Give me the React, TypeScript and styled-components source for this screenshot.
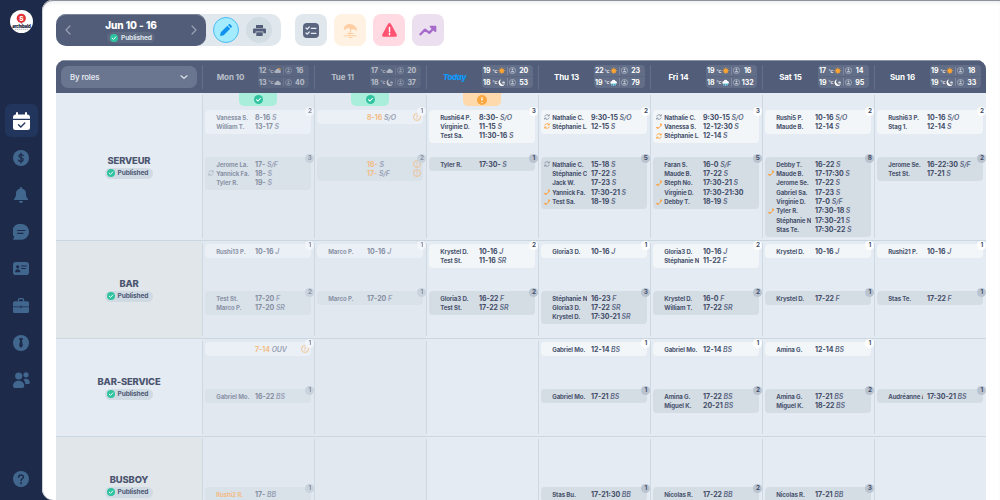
import React from "react";
import styled, { createGlobalStyle, css } from "styled-components";

const GlobalStyle = createGlobalStyle`
  * { box-sizing: border-box; }
  html, body { margin: 0; padding: 0; height: 500px; overflow: hidden; }
  body {
    font-family: Inter, "Liberation Sans", sans-serif;
    background: #1e2a49;
    color: #49536d;
  }
  svg { display: block; flex: none; }
`;

/* ---------- layout ---------- */

const Page = styled.div`
  display: flex;
  width: 1000px;
  height: 500px;
  overflow: hidden;
`;

const Sidebar = styled.nav`
  width: 42px;
  height: 500px;
  padding: 10px 0 0;
  display: flex;
  flex-direction: column;
  align-items: center;
  color: #41678f;
`;

const Logo = styled.div`
  width: 23px;
  height: 23px;
  margin-bottom: 71px;
`;

const NavItem = styled.div<{ $active?: boolean; $bottom?: boolean }>`
  width: 33px;
  height: ${(p) => (p.$active ? 33 : 37)}px;
  display: flex;
  align-items: center;
  justify-content: center;
  border-radius: 6px;
  ${(p) => p.$active && css`background: #22355d; color: #fff; margin-bottom: 2px; padding-top: 1px;`}
  ${(p) => p.$bottom && css`margin-top: 62px;`}
`;

const Panel = styled.main`
  flex: 1;
  height: 500px;
  padding: 14px 14px 0;
  background: #fff;
  border-radius: 11px 0 0 11px;
  box-shadow: inset 0 1px 0 #8f929a, inset 0 4px 4px -2px #e6e7ec, inset 1px 0 0 #c9ced8;
  overflow: hidden;
`;

/* ---------- toolbar ---------- */

const Toolbar = styled.div`
  display: flex;
  height: 32px;
  margin-bottom: 14px;
`;

const WeekGroup = styled.div`
  display: flex;
  width: 225px;
  border-radius: 10px;
  background: #e1e8ed;
  margin-right: 14px;
`;

const WeekPicker = styled.div`
  width: 150px;
  height: 32px;
  padding: 0 8px;
  display: flex;
  align-items: center;
  justify-content: space-between;
  border-radius: 10px;
  background: #515d79;
  box-shadow: inset 0 1px 0 #7c8599;
  color: #9aa3b5;
`;

const WeekText = styled.div`
  display: flex;
  flex-direction: column;
  align-items: center;
  padding-top: 2px;
`;

const WeekTitle = styled.div`
  font-size: 10px;
  line-height: 13px;
  letter-spacing: -0.05px;
  font-weight: 800;
  color: #fff;
`;

const Pill = styled.div<{ $dark?: boolean }>`
  display: flex;
  align-items: center;
  gap: 3px;
  height: 11px;
  width: 48px;
  padding-left: 1.5px;
  border-radius: 6px;
  font-size: 6.6px;
  letter-spacing: -0.12px;
  font-weight: 700;
  white-space: nowrap;
  background: ${(p) => (p.$dark ? "#5d6881" : "#d0dae2")};
  color: ${(p) => (p.$dark ? "#dfe4ec" : "#4f5a76")};
  ${(p) => p.$dark && css`padding-left: 3.5px; gap: 2.5px;`}
`;

const RoundButton = styled.div<{ $on?: boolean }>`
  width: 26px;
  height: 26px;
  margin: 3px 0 0 7px;
  border-radius: 50%;
  display: flex;
  align-items: center;
  justify-content: center;
  background: ${(p) => (p.$on ? "#a3ebfe" : "#d2dce3")};
  border: ${(p) => (p.$on ? "1px solid #4cbcf3" : "none")};
`;

const SquareButton = styled.div<{ $bg: string }>`
  width: 32px;
  height: 32px;
  margin-right: 7px;
  border-radius: 8px;
  display: flex;
  align-items: center;
  justify-content: center;
  background: ${(p) => p.$bg};
`;

/* ---------- schedule ---------- */

const Table = styled.section`
  width: 930px;
  border-radius: 9px 9px 0 0;
  overflow: hidden;
`;

const HeaderRow = styled.div`
  display: grid;
  grid-template-columns: 146px repeat(7, 112px);
  height: 33px;
  background: #515d79;
  box-shadow: inset 0 1px 0 #8a93a6;
`;

const SelectCell = styled.div`
  padding: 6px 5px 0;
`;

const Select = styled.div`
  height: 22px;
  padding: 0 9px;
  display: flex;
  align-items: center;
  justify-content: space-between;
  border-radius: 7px;
  background: #6a7690;
  color: #e2e6ee;
  font-size: 7.8px;
  letter-spacing: -0.1px;
  font-weight: 600;
`;

const DayHead = styled.div<{ $past?: boolean }>`
  display: flex;
  align-items: center;
  height: 33px;
  background: linear-gradient(#64708a, #64708a) 0 5px / 1px 24px no-repeat;
  & > * { opacity: ${(p) => (p.$past ? 0.6 : 1)}; }
`;

const DayName = styled.div<{ $today?: boolean }>`
  width: 56px;
  padding-left: 1px;
  text-align: center;
  font-size: 8px;
  letter-spacing: -0.1px;
  font-weight: 700;
  color: #fff;
  ${(p) => p.$today && css`color: #0d9bff; font-style: italic; font-weight: 800; letter-spacing: -0.35px;`}
`;

const Weather = styled.div`
  width: 51px;
  height: 23px;
  border-radius: 4px;
  background: linear-gradient(#626e87 11px, #5a6680 11px, #5a6680 12px, #626e87 12px);
  overflow: hidden;
`;

const WeatherLine = styled.div`
  display: flex;
  align-items: center;
  height: 11.5px;
  padding-left: 1px;
  color: #fff;
  font-size: 7px;
  letter-spacing: -0.1px;
  font-weight: 700;
`;

const Temp = styled.span`
  width: 9.4px;
`;

const Unit = styled.span`
  width: 5.4px;
  font-family: Roboto, sans-serif;
  font-size: 5.4px;
  font-weight: 500;
  letter-spacing: 0;
  white-space: nowrap;
`;

const Bar = styled.span`
  width: 1px;
  height: 8px;
  margin: 0 1.5px 0 1.5px;
  background: #7c87a0;
`;

const Guests = styled.span`
  flex: 1;
  text-align: center;
  padding-right: 2px;
`;

const RoleRow = styled.div<{ $first?: boolean; $alt?: boolean }>`
  display: grid;
  grid-template-columns: 146px repeat(7, 112px);
  height: ${(p) => (p.$first ? 148 : 98)}px;
  border-bottom: 1px solid #cbd8e2;
  background: #e4ebf3;
  --top: ${(p) => (p.$first ? 17 : 3)}px;
  --role: ${(p) => (p.$alt ? "#e1e6ea" : "#e4ebf3")};
`;

const RoleCell = styled.div`
  display: flex;
  flex-direction: column;
  align-items: center;
  justify-content: center;
  background: var(--role);
`;

const RoleName = styled.div`
  font-size: 9.4px;
  line-height: 13px;
  margin-top: -1px;
  padding-bottom: 1px;
  letter-spacing: -0.14px;
  font-weight: 800;
  color: #4c556f;
`;

const DayCell = styled.div<{ $past?: boolean }>`
  position: relative;
  padding: var(--top) 2px 0 3.4px;
  background:
    linear-gradient(#ccd8e2, #ccd8e2) 0 2px / 1px calc(100% - 4px) no-repeat,
    ${(p) => (p.$past ? "#e1e8f0" : "#e4ebf3")};
`;

const StatusTab = styled.div<{ $warn?: boolean }>`
  position: absolute;
  top: 0;
  left: 37px;
  width: 38px;
  height: 13px;
  display: flex;
  align-items: center;
  justify-content: center;
  border-radius: 0 0 5px 5px;
  background: ${(p) => (p.$warn ? "#fdd9ab" : "#a9eeda")};
`;

const Slot = styled.div<{ $past?: boolean }>`
  height: 47px;
  opacity: ${(p) => (p.$past ? 0.58 : 1)};
`;

const Card = styled.div<{ $evening?: boolean }>`
  position: relative;
  width: 106px;
  padding: 2.4px 2.8px 2.4px 3px;
  border-radius: 4px;
  background: ${(p) => (p.$evening ? "#d4dce4" : "#f2f6f9")};
`;

const Count = styled.span<{ $evening?: boolean }>`
  position: absolute;
  top: -3px;
  right: -3px;
  width: 9px;
  height: 9px;
  border-radius: 50%;
  text-align: center;
  font-size: 6.4px;
  line-height: 9px;
  font-weight: 700;
  color: #444e69;
  background: ${(p) => (p.$evening ? "#b9c4d0" : "#ffffff")};
`;

const ShiftLine = styled.div`
  display: flex;
  align-items: center;
  height: 9.37px;
  white-space: nowrap;
`;

const Mark = styled.span`
  width: 7.8px;
`;

const Name = styled.span<{ $hot?: boolean }>`
  width: 35.2px;
  margin-right: 3.6px;
  overflow: hidden;
  font-size: 6.1px;
  letter-spacing: -0.1px;
  line-height: 9px;
  font-weight: 700;
  color: ${(p) => (p.$hot ? "#ff9d33" : "#49536d")};
`;

const Time = styled.span<{ $hot?: boolean }>`
  font-size: 7px;
  line-height: 9px;
  font-weight: 700;
  color: ${(p) => (p.$hot ? "#ff9d33" : "#414b66")};
`;

const Tag = styled.em`
  flex: 1;
  margin-left: 1.6px;
  font-size: 6.9px;
  letter-spacing: -0.1px;
  line-height: 9px;
  font-weight: 600;
  color: #5d6984;
`;

/* ---------- icons ---------- */

const CheckDot = ({ size = 8 }: { size?: number }) => (
  <svg width={size} height={size} viewBox="0 0 16 16">
    <circle cx="8" cy="8" r="8" fill="#2fc3a0" />
    <path d="M4.4 8.3 7 10.8l4.6-5" fill="none" stroke="#fff" strokeWidth="1.8" strokeLinecap="round" />
  </svg>
);

const WarnDot = () => (
  <svg width="10" height="10" viewBox="0 0 16 16">
    <circle cx="8" cy="8" r="8" fill="#fba741" />
    <path d="M8 3.5v5.4M8 11v1.8" stroke="#fff" strokeWidth="2" />
  </svg>
);

const AlertRing = () => (
  <svg width="8" height="8" viewBox="0 0 16 16" fill="none" stroke="#ff9d33" strokeWidth="1.6">
    <circle cx="8" cy="8" r="7" />
    <path d="M8 4v5M8 10.6v2" />
  </svg>
);

const Chevron = ({ dir }: { dir: "left" | "right" | "down" }) => (
  <svg width="8" height="10" viewBox="0 0 8 10" fill="none" stroke="currentColor" strokeWidth="1.2" strokeLinecap="round" strokeLinejoin="round">
    <path d={dir === "left" ? "M6 1 2 5l4 4" : dir === "right" ? "M2 1l4 4-4 4" : "M1 3.8l3 2.6 3-2.6"} />
  </svg>
);

const CycleIcon = ({ hot }: { hot?: boolean }) => (
  <svg width="6" height="6" viewBox="0 0 12 12" fill="none" stroke={hot ? "#ff9d33" : "#8992a3"} strokeWidth="1.7">
    <path d="M1.5 5A4.6 4.6 0 0 1 10 3.6M10.5 7A4.6 4.6 0 0 1 2 8.4M10.6 .8v3.2H7.4M1.4 11.2V8h3.2" />
  </svg>
);

const BendIcon = () => (
  <svg width="6" height="6" viewBox="0 0 12 12" fill="none" stroke="#ff9d33" strokeLinecap="round">
    <path d="M2 9.8C6 10.8 9.8 7.5 10.2 2.5" strokeWidth="1.8" />
    <path d="M1.8 9l2.200 1.200M9.300 2l1.400 1.900" strokeWidth="2.4" />
  </svg>
);

type Sky = "sun" | "cloudsun" | "cloud" | "moon" | "rain";

const cloudPath = "M3.5 13a2.9 2.9 0 0 1 0-5.8A4.3 4.3 0 0 1 11.6 6.5 3.3 3.3 0 0 1 12.2 13z";

const SkyIcon = ({ kind }: { kind: Sky }) => (
  <svg width="7.500" height="7.500" viewBox="0 0 16 16">
    {kind === "sun" && (
      <g stroke="#ffa433" strokeWidth="1.5" fill="#ffa433">
        <circle cx="8" cy="8" r="4" />
        <path d="M8 1v14M1 8h14M3 3l10 10M13 3 3 13" />
      </g>
    )}
    {kind === "cloudsun" && (
      <g>
        <circle cx="10.5" cy="5.5" r="4" fill="#ffa433" />
        <path d={cloudPath} fill="#e8ecf2" />
      </g>
    )}
    {kind === "cloud" && <path d={cloudPath} fill="#e8ecf2" />}
    {kind === "moon" && (
      <g fill="#fff">
        <path d="M7 1a7 7 0 1 0 7.5 9.5A6 6 0 0 1 7 1z" />
        <path d="M9 9.500h5a1.600 1.600 0 0 0 0-3.200 2.600 2.600 0 0 0-4.800.4A1.500 1.500 0 0 0 9 9.500z" opacity=".7" />
      </g>
    )}
    {kind === "rain" && (
      <g>
        <path d="M3.5 10.500a2.900 2.900 0 0 1 0-5.800A4.300 4.300 0 0 1 11.600 4 3.300 3.300 0 0 1 12.200 10.500z" fill="#fff" />
        <path d="M5 9l-1.800 5M8.800 9 7 15M12.300 9l-1.800 5" stroke="#6fd3ea" strokeWidth="2.2" />
      </g>
    )}
  </svg>
);

const GuestIcon = () => (
  <svg width="7" height="7" viewBox="0 0 16 16" fill="none" stroke="#c4cbd7" strokeWidth="1.4">
    <circle cx="8" cy="8" r="7" />
    <circle cx="8" cy="5.6" r="1.5" fill="#c4cbd7" />
    <path d="M5 11.3c.4-2.600 5.600-2.600 6 0z" fill="#c4cbd7" />
  </svg>
);

const LogoMark = () => (
  <svg width="23" height="23" viewBox="0 0 23 23">
    <circle cx="11.5" cy="11.5" r="11.5" fill="#fff" />
    <circle cx="11.3" cy="8.3" r="4.6" fill="#e03238" />
    <text x="11.3" y="10.7" textAnchor="middle" fontFamily="Inter, sans-serif" fontWeight="800" fontSize="6.5" fill="#fff">S</text>
    <text x="11.5" y="17.6" textAnchor="middle" fontFamily="Inter, sans-serif" fontWeight="900" fontSize="4.3" textLength="18.5" fill="#1d2947">archibald</text>
    <path d="M5 19.3h13" stroke="#8b92a3" strokeWidth=".7" strokeDasharray="1.5 .5" />
  </svg>
);

const cut = "#1e2a49";

const CalendarIcon = () => (
  <svg width="17" height="19" viewBox="0 0 17 19" fill="currentColor">
    <path d="M3 1a1 1 0 0 1 2 0v1.500h7V1a1 1 0 0 1 2 0v1.500a3 3 0 0 1 3 3v1.300H0V5.500a3 3 0 0 1 3-3z" />
    <path d="M0 8h17v7.500a2.500 2.500 0 0 1-2.500 2.500h-12A2.500 2.500 0 0 1 0 15.500z" />
    <path d="M5.500 12.700 7.800 15l4-4" fill="none" stroke="#22355d" strokeWidth="1.3" strokeLinecap="round" />
  </svg>
);

const DollarIcon = () => (
  <svg width="16" height="16" viewBox="0 0 16 16">
    <circle cx="8" cy="8" r="8" fill="currentColor" />
    <path d="M10.300 5.800C9.800 4.300 6 4 5.900 6.100 5.900 8.200 10.300 7.500 10.300 9.800 10.200 12 6 11.900 5.500 10M8 3v10" fill="none" stroke={cut} strokeWidth="1.2" strokeLinecap="round" />
  </svg>
);

const BellIcon = () => (
  <svg width="14" height="16" viewBox="0 0 14 16" fill="currentColor">
    <path d="M7 0a1 1 0 0 1 1 1v.6c2.500.5 4 2.400 4 4.900 0 3 .6 4 1.800 5.200.5.600.1 1.300-.6 1.300H.8c-.7 0-1.100-.7-.6-1.300C1.400 10.500 2 9.500 2 6.500c0-2.500 1.500-4.400 4-4.900V1a1 1 0 0 1 1-1zM5 14h4a2 2 0 0 1-4 0z" />
  </svg>
);

const ChatIcon = () => (
  <svg width="16" height="16" viewBox="0 0 16 16">
    <path d="M8.200 0a7.800 7.800 0 1 1 0 15.700H.8c-.7 0-.8-.6-.5-1l1-1.700A7.800 7.800 0 0 1 8.200 0z" fill="currentColor" />
    <path d="M4.500 6.500h7.500M4.500 9.300h5.500" stroke={cut} strokeWidth="1.2" strokeLinecap="round" />
  </svg>
);

const CardIcon = () => (
  <svg width="16" height="13" viewBox="0 0 16 13">
    <rect width="16" height="13" rx="2.8" fill="currentColor" />
    <circle cx="4.7" cy="4.8" r="1.6" fill={cut} />
    <path d="M2 10.300c0-4 5.400-4 5.400 0z" fill={cut} />
    <path d="M8.500 4h5M8.500 6.500h4" stroke={cut} strokeWidth="1" strokeLinecap="round" />
  </svg>
);

const CaseIcon = () => (
  <svg width="16" height="15" viewBox="0 0 16 15">
    <path d="M5.500 3.500V1.600C5.500 1 5.800.7 6.300.7h3.400c.5 0 .8.300.8.900v1.900" fill="none" stroke="currentColor" strokeWidth="1.3" />
    <rect y="3.2" width="16" height="11.8" rx="1.6" fill="currentColor" />
    <path d="M0 8.800h6.500M9.500 8.800H16M7.200 8v1.800h1.600V8z" stroke={cut} strokeWidth=".7" fill="none" />
  </svg>
);

const TieIcon = () => (
  <svg width="16" height="16" viewBox="0 0 16 16">
    <circle cx="8" cy="8" r="8" fill="currentColor" />
    <path d="M6.500 3h3l.4 1.200L8.900 5.500l1 5.300L8 13l-1.900-2.200 1-5.300L6.100 4.200z" fill={cut} />
  </svg>
);

const UsersIcon = () => (
  <svg width="17" height="16" viewBox="0 0 17 16" fill="currentColor">
    <circle cx="5.7" cy="4" r="3.6" />
    <circle cx="13" cy="2.8" r="2.6" />
    <path d="M0 13.500C0 7 11.200 7 11.200 13.500c0 1.500-.6 2.500-1.600 2.500H1.600C.6 16 0 15 0 13.500z" />
    <path d="M10.500 7.500c2.500-1.800 6.300-.5 6.300 3.300 0 .8-.5 1.300-1.200 1.300h-3.200c-.2-1.800-.8-3.300-1.900-4.600z" />
  </svg>
);

const HelpIcon = () => (
  <svg width="16" height="16" viewBox="0 0 16 16">
    <circle cx="8" cy="8" r="8" fill="currentColor" />
    <path d="M5.600 6.200C5.700 3 10.600 3.300 10.400 6.200 10.300 7.800 8 7.900 8 9.500M8 11.600v1.200" fill="none" stroke={cut} strokeWidth="1.5" strokeLinecap="round" />
  </svg>
);

const PencilIcon = () => (
  <svg width="12" height="12" viewBox="0 0 12 12" fill="#1092ee">
    <path d="M0 12l.8-3.700L7.300 1.800l2.900 2.900-6.500 6.500zM8 1.100 8.800.4c.4-.4 1-.4 1.400 0l1.400 1.400c.4.400.4 1 0 1.400l-.7.800z" />
  </svg>
);

const PrinterIcon = () => (
  <svg width="13" height="11" viewBox="0 0 13 11">
    <path d="M3 0h7v3H3zM1.300 3.500h10.400c.8 0 1.300.5 1.300 1.300V8.200h-2.700V6.600H2.700v1.600H0V4.800c0-.8.500-1.300 1.300-1.300zM3.300 7.300h6.400V11H3.300z" fill="#525e7a" />
  </svg>
);

const ListIcon = () => (
  <svg width="16" height="15" viewBox="0 0 16 15">
    <rect width="16" height="15" rx="4" fill="#5a6580" />
    <path d="M3 5l1.200 1.200L6.300 4M3 10l1.200 1.200L6.300 9M8.300 5.300h4.700M8.300 10.300h4.700" fill="none" stroke="#e8edf3" strokeWidth="1.2" strokeLinecap="round" />
  </svg>
);

const BeachIcon = () => (
  <svg width="15" height="15" viewBox="0 0 15 15" fill="none" stroke="#ffcfa3">
    <path d="M.7 7C.8 1 7 .2 9.500 1.600c2.800 1.600 4.600 3 4.300 6.400l-3.200-2-2.700.5-3-1.800L3 6.300z" fill="#ffcfa3" stroke="none" />
    <path d="M8 4 6.700 12.500M1 12.800h12M4.500 10.500h5.500M6 14.500h3" strokeWidth="1.1" strokeLinecap="round" />
  </svg>
);

const TriangleIcon = () => (
  <svg width="15" height="14" viewBox="0 0 15 14">
    <path d="M6 1c.7-1.300 2.300-1.300 3 0l5.600 10.200c.7 1.300 0 2.600-1.500 2.600H1.900C.4 13.800-.3 12.500.4 11.200z" fill="#ff5371" />
    <path d="M7.500 4.500v4M7.500 10.300v1.400" stroke="#fff" strokeWidth="1.5" strokeLinecap="round" />
  </svg>
);

const TrendIcon = () => (
  <svg width="18" height="11" viewBox="0 0 18 11" fill="none" stroke="#a66bcb" strokeWidth="2.3" strokeLinejoin="round" strokeLinecap="round">
    <path d="M1.500 9.300 6 4.600l4.300 3.300L15 3" />
    <path d="M11.500 1.600h5v4.700z" fill="#a66bcb" strokeWidth="1.6" />
  </svg>
);

/* ---------- data ---------- */

interface Shift {
  n?: string;
  t: string;
  g?: string;
  mark?: "cycle" | "hotcycle" | "bend";
  hotTime?: boolean;
  hotName?: boolean;
}

const s = (n: string, t: string, g = "", mark?: Shift["mark"]): Shift => ({ n, t, g, mark });
const open = (t: string, g: string): Shift => ({ t, g, hotTime: true });
const blank: Shift = { t: "" };

interface Day {
  label: string;
  past?: boolean;
  today?: boolean;
  sky: [number, Sky, number][];
  status?: "ok" | "warn";
}

const days: Day[] = [
  { label: "Mon 10", past: true, status: "ok", sky: [[12, "cloudsun", 16], [13, "cloud", 40]] },
  { label: "Tue 11", past: true, status: "ok", sky: [[17, "cloud", 20], [18, "moon", 37]] },
  { label: "Today", today: true, status: "warn", sky: [[19, "sun", 20], [18, "moon", 53]] },
  { label: "Thu 13", sky: [[22, "sun", 23], [19, "rain", 79]] },
  { label: "Fri 14", sky: [[19, "sun", 16], [18, "rain", 132]] },
  { label: "Sat 15", sky: [[17, "sun", 14], [19, "moon", 95]] },
  { label: "Sun 16", sky: [[19, "sun", 18], [19, "moon", 33]] },
];

interface Role {
  name: string;
  cells: [Shift[], Shift[]][];
}

const roles: Role[] = [
  {
    name: "SERVEUR",
    cells: [
      [[s("Vanessa S.", "8-16", "S"), s("William T.", "13-17", "S")],
       [s("Jerome La.", "17-", "S/F"), s("Yannick Fa.", "18-", "S", "cycle"), s("Tyler R.", "19-", "S")]],
      [[open("8-16", "S/O")], [open("16-", "S"), open("17-", "S/F")]],
      [[s("Rushi64 P.", "8:30-", "S/O"), s("Virginie D.", "11-15", "S"), s("Test Sa.", "11:30-16", "S")],
       [s("Tyler R.", "17:30-", "S")]],
      [[s("Nathalie C.", "9:30-15", "S/O", "cycle"), s("Stéphanie L.", "12-15", "S", "hotcycle")],
       [s("Nathalie C.", "15-18", "S", "cycle"), s("Stéphanie C", "17-22", "S"), s("Jack W.", "17-23", "S"), s("Yannick Fa.", "17:30-21", "S", "bend"), s("Test Sa.", "18-19", "S", "bend")]],
      [[s("Nathalie C.", "9:30-15", "S/O", "cycle"), s("Vanessa S.", "12-12:30", "S", "bend"), s("Stéphanie L.", "12-14", "S", "hotcycle")],
       [s("Faran S.", "16-0", "S/F"), s("Maude B.", "17-22", "S"), s("Steph No.", "17:30-21", "S", "bend"), s("Virginie D.", "17:30-21:30"), s("Debby T.", "18-19", "S", "bend")]],
      [[s("Rushi5 P.", "10-16", "S/O"), s("Maude B.", "12-14", "S")],
       [s("Debby T.", "16-22", "S"), s("Maude B.", "17-17:30", "S", "bend"), s("Jerome Se.", "17-22", "S"), s("Gabriel Sa.", "17-23", "S"), s("Virginie D.", "17-0", "S/F"), s("Tyler R.", "17:30-18", "S", "bend"), s("Stéphanie N", "17:30-21", "S"), s("Stas Te.", "17:30-22", "S")]],
      [[s("Rushi63 P.", "10-16", "S/O"), s("Stag 1.", "12-14", "S")],
       [s("Jerome Se.", "16-22:30", "S/F"), s("Test St.", "17-21", "S")]],
    ],
  },
  {
    name: "BAR",
    cells: [
      [[s("Rushi13 P.", "10-16", "J")], [s("Test St.", "17-20", "F"), s("Marco P.", "17-20", "SR")]],
      [[s("Marco P.", "10-16", "J")], [s("Marco P.", "17-20", "F")]],
      [[s("Krystel D.", "10-16", "J"), s("Test St.", "11-16", "SR")], [s("Gloria3 D.", "16-22", "F"), s("Test St.", "17-22", "SR")]],
      [[s("Gloria3 D.", "10-16", "J")], [s("Stéphanie N", "16-23", "F"), s("Gloria3 D.", "17-22", "SR"), s("Krystel D.", "17:30-21", "SR")]],
      [[s("Gloria3 D.", "10-16", "J"), s("Stéphanie N", "11-22", "F")], [s("Krystel D.", "16-0", "F"), s("William T.", "17-22", "SR")]],
      [[s("Krystel D.", "10-16", "J")], [s("Krystel D.", "17-22", "F")]],
      [[s("Rushi21 P.", "10-16", "J")], [s("Stas Te.", "17-22", "F")]],
    ],
  },
  {
    name: "BAR-SERVICE",
    cells: [
      [[open("7-14", "OUV")], [s("Gabriel Mo.", "16-22", "BS")]],
      [[], []],
      [[], []],
      [[s("Gabriel Mo.", "12-14", "BS")], [s("Gabriel Mo.", "17-21", "BS")]],
      [[s("Gabriel Mo.", "12-14", "BS")], [s("Amina G.", "17-22", "BS"), s("Miguel K.", "20-21", "BS")]],
      [[s("Amina G.", "12-14", "BS")], [s("Amina G.", "17-21", "BS"), s("Miguel K.", "18-22", "BS")]],
      [[], [s("Audréanne A", "17:30-21", "BS")]],
    ],
  },
  {
    name: "BUSBOY",
    cells: [
      [[], [{ n: "Rushi2 R.", t: "17-", g: "BB", hotName: true }]],
      [[], []],
      [[], []],
      [[], [s("Stas Bu.", "17-21:30", "BB")]],
      [[], [s("Nicolas R.", "17-22", "BB"), blank]],
      [[], [s("Nicolas R.", "17-21", "BB"), blank, blank]],
      [[], []],
    ],
  },
];

/* ---------- components ---------- */

const Published = ({ dark }: { dark?: boolean }) => (
  <Pill $dark={dark}>
    <CheckDot />
    Published
  </Pill>
);

const ShiftCard = ({ shifts, evening }: { shifts: Shift[]; evening?: boolean }) =>
  shifts.length === 0 ? null : (
    <Card $evening={evening}>
      {shifts.map((x, i) => (
        <ShiftLine key={i}>
          <Mark>
            {x.mark === "bend" && <BendIcon />}
            {(x.mark === "cycle" || x.mark === "hotcycle") && <CycleIcon hot={x.mark === "hotcycle"} />}
          </Mark>
          <Name $hot={x.hotName}>{x.n}</Name>
          <Time $hot={x.hotTime}>{x.t}</Time>
          <Tag>{x.g}</Tag>
          {x.hotTime && <AlertRing />}
        </ShiftLine>
      ))}
      <Count $evening={evening}>{shifts.length}</Count>
    </Card>
  );

export default function App() {
  return (
    <Page>
      <GlobalStyle />
      <Sidebar>
        <Logo><LogoMark /></Logo>
        <NavItem $active><CalendarIcon /></NavItem>
        <NavItem><DollarIcon /></NavItem>
        <NavItem><BellIcon /></NavItem>
        <NavItem><ChatIcon /></NavItem>
        <NavItem><CardIcon /></NavItem>
        <NavItem><CaseIcon /></NavItem>
        <NavItem><TieIcon /></NavItem>
        <NavItem><UsersIcon /></NavItem>
        <NavItem $bottom><HelpIcon /></NavItem>
      </Sidebar>
      <Panel>
        <Toolbar>
          <WeekGroup>
            <WeekPicker>
              <Chevron dir="left" />
              <WeekText>
                <WeekTitle>Jun 10 - 16</WeekTitle>
                <Published dark />
              </WeekText>
              <Chevron dir="right" />
            </WeekPicker>
            <RoundButton $on><PencilIcon /></RoundButton>
            <RoundButton><PrinterIcon /></RoundButton>
          </WeekGroup>
          <SquareButton $bg="#e1e8ed"><ListIcon /></SquareButton>
          <SquareButton $bg="#fff2e3"><BeachIcon /></SquareButton>
          <SquareButton $bg="#ffdae2"><TriangleIcon /></SquareButton>
          <SquareButton $bg="#ebdff0"><TrendIcon /></SquareButton>
        </Toolbar>
        <Table>
          <HeaderRow>
            <SelectCell>
              <Select>
                By roles
                <Chevron dir="down" />
              </Select>
            </SelectCell>
            {days.map((d) => (
              <DayHead key={d.label} $past={d.past}>
                <DayName $today={d.today}>{d.label}</DayName>
                <Weather>
                  {d.sky.map(([temp, kind, guests], i) => (
                    <WeatherLine key={i}>
                      <Temp>{temp}</Temp>
                      <Unit>°c</Unit>
                      <SkyIcon kind={kind} />
                      <Bar />
                      <GuestIcon />
                      <Guests>{guests}</Guests>
                    </WeatherLine>
                  ))}
                </Weather>
              </DayHead>
            ))}
          </HeaderRow>
          {roles.map((r, ri) => (
            <RoleRow key={r.name} $first={ri === 0} $alt={ri % 2 === 1}>
              <RoleCell>
                <RoleName>{r.name}</RoleName>
                <Published />
              </RoleCell>
              {r.cells.map(([day, evening], ci) => (
                <DayCell key={ci} $past={days[ci].past}>
                  {ri === 0 && days[ci].status && (
                    <StatusTab $warn={days[ci].status === "warn"}>
                      {days[ci].status === "warn" ? <WarnDot /> : <CheckDot size={9} />}
                    </StatusTab>
                  )}
                  <Slot $past={days[ci].past}><ShiftCard shifts={day} /></Slot>
                  <Slot $past={days[ci].past}><ShiftCard shifts={evening} evening /></Slot>
                </DayCell>
              ))}
            </RoleRow>
          ))}
        </Table>
      </Panel>
    </Page>
  );
}
